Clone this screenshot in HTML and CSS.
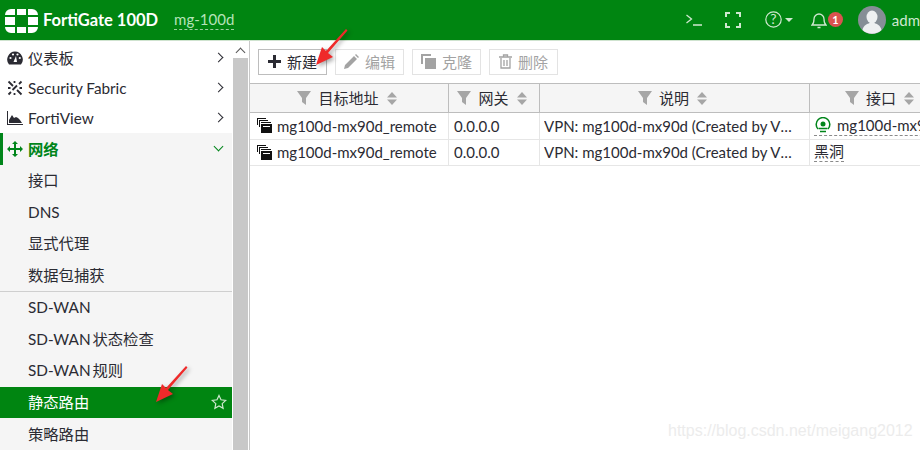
FILE: index.html
```html
<!DOCTYPE html>
<html lang="zh">
<head>
<meta charset="utf-8">
<title>FortiGate 100D</title>
<link rel="stylesheet" href="styles.css">
</head>
<body>
<div class="app">
  <header class="topbar">
    <svg class="logo" width="33" height="24" viewBox="0 0 33 24"><path fill="#fff" d="M6 0h4v6H0a6 6 0 0 1 6-6zM12 0h9v6h-9zM23 0h4a6 6 0 0 1 6 6H23zM0 8h10v8H0zM23 8h10v8H23zM0 18h10v6H6a6 6 0 0 1-6-6zM12 18h9v6h-9zM23 18h10a6 6 0 0 1-6 6h-4z"/></svg>
    <span class="brand">FortiGate 100D</span>
    <span class="host">mg-100d</span>
    <div class="top-tools">
      <svg class="t-cli" width="16" height="12" viewBox="0 0 16 12"><path fill="none" stroke="#cfe8d0" stroke-width="1.3" d="M0.500 1l5 4-5 4M7 11h9"/></svg>
      <svg class="t-full" width="16" height="16" viewBox="0 0 16 16"><path fill="none" stroke="#cfe8d0" stroke-width="2" d="M1 5V1h4M11 1h4v4M15 11v4h-4M5 15H1v-4"/></svg>
      <span class="t-help"><svg width="17" height="17" viewBox="0 0 17 17"><circle cx="8.500" cy="8.500" r="7.700" fill="none" stroke="#cfe8d0" stroke-width="1.200"/><text x="8.500" y="13" text-anchor="middle" class="q">?</text></svg><i class="caret"></i></span>
      <span class="t-bell"><svg width="16" height="18" viewBox="0 0 16 18"><path fill="none" stroke="#cfe8d0" stroke-width="1.300" d="M1 14c2-1.500 2-3.500 2-6a5 5 0 0 1 10 0c0 2.500 0 4.500 2 6zM6.500 16.500h3"/></svg><b class="badge">1</b></span>
      <svg class="avatar" width="28" height="28" viewBox="0 0 28 28"><circle cx="14" cy="14" r="14" fill="#868e96"/><ellipse cx="14" cy="11" rx="5.500" ry="6.500" fill="#eef0f1"/><path fill="#eef0f1" d="M4.500 24c1-5 5-6 7-7h5c2 1 6 2 7 7a14 14 0 0 1-19 0z"/></svg>
      <span class="user">admin</span>
    </div>
  </header>
  <div class="body">
    <nav class="side">
      <ul class="menu top">
        <li><svg class="mi" width="16" height="14" viewBox="0 0 16 14"><path fill="#2b2b33" d="M8 .5A8 8 0 0 0 2 13.500h12A8 8 0 0 0 8 .5z"/><g fill="#fff"><circle cx="3.500" cy="7" r="1.100"/><circle cx="6" cy="3.500" r="1.100"/><circle cx="10.500" cy="3.500" r="1.100"/><circle cx="12.800" cy="7" r="1.100"/><path d="M6.500 11l2.500-6 1 6z"/></g></svg>仪表板<i class="chev"></i></li>
        <li><svg class="mi" width="16" height="16" viewBox="0 0 16 16"><path fill="none" stroke="#2b2b33" stroke-width="1.800" d="M1.500 1.500l4.500 4.500M10 10l4.500 4.500M14.500 1.500l-2.500 2.500M4 12l-2.500 2.500M10 5.500L5.500 10M7.500 1v2M7.500 13v2M1 8h2.500M12.500 8H15"/></svg>Security Fabric<i class="chev"></i></li>
        <li><svg class="mi" width="16" height="14" viewBox="0 0 16 14"><path fill="#2b2b33" d="M0 0h1v13h15v1H0zM2 12V9l3-5 2 3 2-1 2 1 2 2 2 3z"/></svg>FortiView<i class="chev"></i></li>
      </ul>
      <div class="group">
        <div class="g-head"><svg class="mi" width="16" height="16" viewBox="0 0 16 16"><path fill="#00851a" d="M8 0l3 3H9v4h4V5l3 3-3 3V9H9v4h2l-3 3-3-3h2V9H3v2L0 8l3-3v2h4V3H5z"/></svg>网络<i class="chev down"></i></div>
        <ul class="menu sub">
          <li>接口</li>
          <li>DNS</li>
          <li>显式代理</li>
          <li>数据包捕获</li>
        </ul>
        <ul class="menu sub split">
          <li>SD-WAN</li>
          <li>SD-WAN 状态检查</li>
          <li>SD-WAN 规则</li>
          <li class="on">静态路由<svg class="star" width="16" height="16" viewBox="0 0 16 16"><path fill="none" stroke="#cfe8d0" stroke-width="1.200" d="M8 1.500l2 4.300 4.700.6-3.500 3.200.9 4.700L8 12l-4.100 2.300.9-4.700L1.300 6.400 6 5.800z"/></svg></li>
          <li>策略路由</li>
        </ul>
      </div>
    </nav>
    <div class="scroll"><span class="up"></span><span class="thumb"></span></div>
    <main class="main">
      <div class="toolbar">
        <button class="btn active"><svg width="13" height="13" viewBox="0 0 13 13"><path fill="#2b2b33" d="M5 0h3v5h5v3H8v5H5V8H0V5h5z"/></svg>新建</button>
        <button class="btn"><svg width="15" height="15" viewBox="0 0 15 15"><path fill="#a3a3a3" d="M0 15l1-4L10 2l3 3-9 9zM11 1l1-1 3 3-1 1z"/></svg>编辑</button>
        <button class="btn"><svg width="15" height="15" viewBox="0 0 15 15"><path fill="#a3a3a3" d="M0 0h10v2H2v8H0z"/><path fill="#a3a3a3" d="M4 4h11v11H4z"/></svg>克隆</button>
        <button class="btn"><svg width="13" height="15" viewBox="0 0 13 15"><path fill="none" stroke="#a3a3a3" stroke-width="1.300" d="M2 4v10h9V4M0 3h13M4.500 3V1h4v2M5 6v6M8 6v6"/></svg>删除</button>
      </div>
      <div class="grid">
        <div class="row head">
          <div class="cell c1"><svg class="funnel" width="14" height="14" viewBox="0 0 14 14"><path fill="#a6a6a6" d="M0 0h14L9 7v7L5 11V7z"/></svg>目标地址<svg class="sort" width="10" height="13" viewBox="0 0 10 13"><path fill="#a6a6a6" d="M5 0l5 5.500H0zM0 7.500h10L5 13z"/></svg></div>
          <div class="cell c2"><svg class="funnel" width="14" height="14" viewBox="0 0 14 14"><path fill="#a6a6a6" d="M0 0h14L9 7v7L5 11V7z"/></svg>网关<svg class="sort" width="10" height="13" viewBox="0 0 10 13"><path fill="#a6a6a6" d="M5 0l5 5.500H0zM0 7.500h10L5 13z"/></svg></div>
          <div class="cell c3"><svg class="funnel" width="14" height="14" viewBox="0 0 14 14"><path fill="#a6a6a6" d="M0 0h14L9 7v7L5 11V7z"/></svg>说明<svg class="sort" width="10" height="13" viewBox="0 0 10 13"><path fill="#a6a6a6" d="M5 0l5 5.500H0zM0 7.500h10L5 13z"/></svg></div>
          <div class="cell c4"><svg class="funnel" width="14" height="14" viewBox="0 0 14 14"><path fill="#a6a6a6" d="M0 0h14L9 7v7L5 11V7z"/></svg>接口<svg class="sort" width="10" height="13" viewBox="0 0 10 13"><path fill="#a6a6a6" d="M5 0l5 5.500H0zM0 7.500h10L5 13z"/></svg></div>
        </div>
        <div class="row">
          <div class="cell c1"><svg class="addr" width="15" height="15" viewBox="0 0 15 15"><path fill="#111" d="M0 0h9v1H0zM0 1h1v6H0zM2 2h9v1H2zM2 3h1v6H2zM4 4h10v1H4z"/><path fill="#111" d="M4 6h11v9H4z"/><path fill="#fff" d="M6 8h7v1H6z"/></svg>mg100d-mx90d_remote</div>
          <div class="cell c2">0.0.0.0</div>
          <div class="cell c3"><span class="ell">VPN: mg100d-mx90d (Created by VPN wizard)</span></div>
          <div class="cell c4"><span class="dash"><svg class="tun" width="16" height="16" viewBox="0 0 16 16"><path fill="none" stroke="#00851a" stroke-width="1.500" d="M3 12a6.800 6.800 0 1 1 10 0"/><circle cx="8" cy="7" r="2.500" fill="#00851a"/><path stroke="#00851a" stroke-width="1.500" d="M3.500 11.500h9M5 14.500h6"/></svg>mg100d-mx90d</span></div>
        </div>
        <div class="row">
          <div class="cell c1"><svg class="addr" width="15" height="15" viewBox="0 0 15 15"><path fill="#111" d="M0 0h9v1H0zM0 1h1v6H0zM2 2h9v1H2zM2 3h1v6H2zM4 4h10v1H4z"/><path fill="#111" d="M4 6h11v9H4z"/><path fill="#fff" d="M6 8h7v1H6z"/></svg>mg100d-mx90d_remote</div>
          <div class="cell c2">0.0.0.0</div>
          <div class="cell c3"><span class="ell">VPN: mg100d-mx90d (Created by VPN wizard)</span></div>
          <div class="cell c4"><span class="dash">黑洞</span></div>
        </div>
      </div>
    </main>
  </div>
  <svg class="arrow a1" width="34" height="38" viewBox="0 0 34 38"><path fill="#ef2a2a" d="M31 1l1.500 1.500L13 25l5 4L1 37l6-18 4 4z"/></svg>
  <svg class="arrow a2" width="34" height="38" viewBox="0 0 34 38"><path fill="#ef2a2a" d="M31 1l1.500 1.500L13 25l5 4L1 37l6-18 4 4z"/></svg>
  <div class="mark">https://blog.csdn.net/meigang2012</div>
</div>
</body>
</html>
```
FILE: styles.css
```css
* { box-sizing: border-box; }
html, body { margin: 0; padding: 0; }
body { font-family: Lato, "Noto Sans CJK SC", sans-serif; font-size: 15px; color: #2b2b33; background: #fff; }
ul { list-style: none; margin: 0; padding: 0; }
i { font-style: normal; display: block; }
.app { position: relative; width: 920px; height: 450px; overflow: hidden; }

.topbar { width: 938px; height: 41px; background: #008511; border-bottom: 1px solid #cfe3cf; display: flex; align-items: center; padding: 0 6px 1px 5px; color: #fff; }
.logo { margin-right: 5px; flex: none; margin-top: 2px; }
.brand { font-size: 16.500px; font-weight: 700; }
.host { margin-left: 16px; font-size: 15px; color: #b5e3b9; border-bottom: 1px dashed #9ccf9f; line-height: 19px; margin-top: 1px; }
.top-tools { margin-left: auto; display: flex; align-items: center; color: #cfe8d0; }
.t-cli { margin-right: 23px; }
.t-full { margin-right: 24px; }
.t-help { display: flex; align-items: center; margin-right: 18px; }
.q { font: 14px Lato, sans-serif; fill: #cfe8d0; }
.caret { margin-left: 3px; width: 0; height: 0; border-left: 4px solid transparent; border-right: 4px solid transparent; border-top: 4px solid #cfe8d0; }
.t-bell { display: flex; align-items: center; margin-right: 15px; }
.badge { margin-left: 1px; width: 15px; height: 15px; border-radius: 50%; background: #d9534f; color: #fff; font-size: 11px; line-height: 15px; text-align: center; font-weight: 700; }
.avatar { margin-right: 6px; }
.user { font-size: 15px; }

.body { display: flex; height: 409px; }
.side { width: 233px; flex: none; padding-top: 2px; border-right: 1px solid #fff; font-size: 15.300px; }
.menu.top li { height: 30px; }
.menu li, .g-head { display: flex; align-items: center; padding-left: 28px; position: relative; white-space: nowrap; line-height: 20px; padding-bottom: 1px; }
.mi { position: absolute; left: 7px; top: 50%; transform: translateY(-50%); }
.chev { position: absolute; right: 10px; top: 50%; width: 7px; height: 7px; margin-top: -4px; border-top: 1.500px solid #2b2b33; border-right: 1.500px solid #2b2b33; transform: rotate(45deg); }
.chev.down { border-color: #00851a; margin-top: -6px; transform: rotate(135deg); }
.group { background: #f5f5f5; height: 320px; }
.g-head { height: 32px; color: #00851a; font-weight: 700; border-left: 3px solid #00851a; padding-left: 25px; }
.g-head .mi { left: 4px; }
.sub li { height: 31.500px; }
.split { border-top: 1px solid #cfcfcf; word-spacing: -2px; }
.sub li.on { background: #008511; color: #fff; padding-bottom: 0; }
.sub li.on + li { padding-bottom: 0; padding-top: 1px; }
.star { position: absolute; right: 5px; top: 7px; }

.scroll { width: 15px; flex: none; background: #fff; display: flex; flex-direction: column; }
.up { height: 17px; flex: none; position: relative; }
.up::after { content: ""; position: absolute; left: 4px; top: 8px; width: 6px; height: 6px; border-top: 1.500px solid #555; border-left: 1.500px solid #555; transform: rotate(45deg); }
.thumb { flex: 1; background: #c8c8c8; }

.main { flex: 1; min-width: 0; margin-left: 1px; border-left: 1px solid #c8c8c8; overflow: hidden; }
.toolbar { display: flex; gap: 8px; padding: 8px 0 0 8px; height: 42px; }
.btn { width: 69px; height: 26px; padding: 0 0 2px; background: #fff; border: 1px solid #e3e3e3; display: flex; align-items: center; justify-content: center; gap: 6px; font: inherit; color: #a3a3a3; }
.btn.active { border-color: #bdbdbd; color: #2b2b33; }
.grid { width: 760px; border-top: 1px solid #bdbdbd; }
.row { display: flex; height: 26.500px; border-bottom: 1px solid #e6e6e6; }
.row.head { height: 29px; background: #f5f5f5; border-bottom-color: #bdbdbd; }
.cell { display: flex; align-items: center; padding: 0 4px; border-right: 1px solid #e6e6e6; white-space: nowrap; overflow: hidden; flex: none; line-height: 20px; }
.head .cell { justify-content: center; border-right-color: #bdbdbd; padding: 0 8px 0 4px; }
.c1 { width: 199px; padding-left: 7px; }
.c2 { width: 91px; padding-left: 5px; }
.c3 { width: 270px; }
.c4 { width: 200px; }
.head .c4 { width: 140px; padding: 0 4px; }
.ell { display: block; width: 252px; overflow: hidden; text-overflow: ellipsis; }
.funnel { margin-right: 7px; flex: none; }
.sort { margin-left: 8px; flex: none; }
.addr { margin-right: 5px; flex: none; }
.dash { display: flex; align-items: center; border-bottom: 1px dashed #8a8a8a; line-height: 19px; }
.tun { margin: 0 6px 0 1px; }

.arrow { position: absolute; filter: drop-shadow(2px 2px 2px rgba(0,0,0,.35)); }
.a1 { left: 315px; top: 28px; }
.a2 { left: 155px; top: 365px; }
.mark { position: absolute; left: 668px; top: 422px; font: 16px "Liberation Sans", sans-serif; color: #ececec; }
```
